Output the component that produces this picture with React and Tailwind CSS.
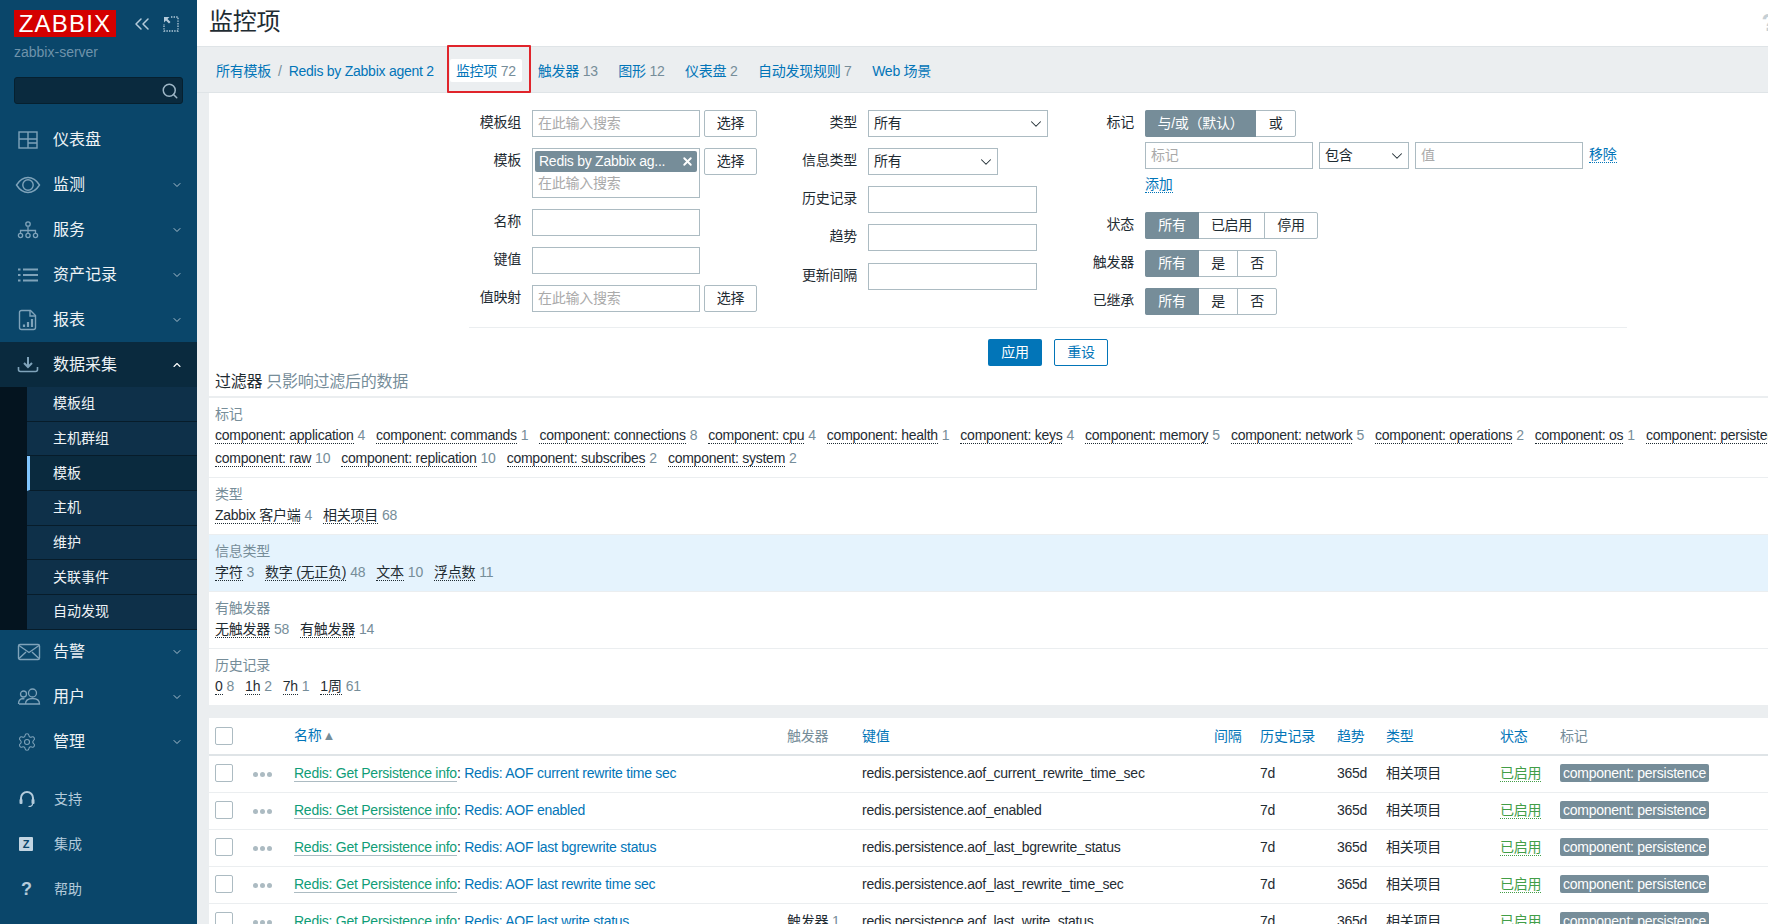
import React from 'react';
import { ChevronDown, ChevronUp, ChevronsLeft, Search, Settings, X } from 'lucide-react';

const FONT = "[font-family:'Liberation_Sans','Noto_Sans_CJK_SC',sans-serif]";
const ROW_GRID = 'grid grid-cols-[38px_41px_493px_75px_352px_46px_77px_49px_114px_60px_1fr] items-center pl-[6px] whitespace-nowrap';

const DashboardIcon = () => (
  <svg width="22" height="20" viewBox="0 0 22 20" fill="none" stroke="currentColor" strokeWidth="1.4">
    <rect x="2" y="2" width="18" height="16" />
    <path d="M11 2v16M2 9h18M11 13h9" />
  </svg>
);
const EyeIcon = () => (
  <svg width="26" height="20" viewBox="0 0 26 20" fill="none" stroke="currentColor" strokeWidth="1.4" className="-ml-[2px]">
    <path d="M1.5 10C5 4.5 9 2.5 13 2.5S21 4.5 24.5 10C21 15.5 17 17.5 13 17.5S5 15.5 1.5 10Z" />
    <circle cx="13" cy="10" r="5.2" />
  </svg>
);
const ServiceIcon = () => (
  <svg width="22" height="20" viewBox="0 0 22 20" fill="none" stroke="currentColor" strokeWidth="1.3">
    <circle cx="11" cy="4" r="2.2" />
    <path d="M11 6.5v4M3.5 13v-2.5h15V13M11 10.5V13" />
    <circle cx="3.5" cy="15.5" r="2.1" />
    <circle cx="11" cy="15.5" r="2.1" />
    <circle cx="18.5" cy="15.5" r="2.1" />
  </svg>
);
const ListIcon = () => (
  <svg width="22" height="20" viewBox="0 0 22 20" fill="none" stroke="currentColor" strokeWidth="2.2">
    <path d="M1 4.5h2.5M6 4.5h15M1 10h2.5M6 10h15M1 15.5h2.5M6 15.5h15" />
  </svg>
);
const ReportIcon = () => (
  <svg width="22" height="22" viewBox="0 0 22 22" fill="none" stroke="currentColor" strokeWidth="1.4">
    <path d="M4.5 1.5h9l5 5v12a2 2 0 0 1-2 2h-12a2 2 0 0 1-2-2v-15a2 2 0 0 1 2-2Z" />
    <path d="M13 1.5v5.5h5.5" />
    <path d="M7 18v-2.5M11 18v-5M15 18v-8" strokeWidth="2.2" />
  </svg>
);
const DownloadIcon = () => (
  <svg width="22" height="20" viewBox="0 0 22 20" fill="none" stroke="currentColor" strokeWidth="2">
    <path d="M11 2v9M7 8l4 4 4-4" />
    <path d="M1.5 12v2.5a2 2 0 0 0 2 2h15a2 2 0 0 0 2-2V12" strokeWidth="1.6" />
  </svg>
);
const MailIcon = () => (
  <svg width="24" height="20" viewBox="0 0 24 20" fill="none" stroke="currentColor" strokeWidth="1.4">
    <rect x="1.5" y="2.5" width="21" height="15" rx="1.5" />
    <path d="M2 3.5 12 10.5 22 3.5M2 16.5l7-6.5M22 16.5 15 10" />
  </svg>
);
const UsersIcon = () => (
  <svg width="24" height="20" viewBox="0 0 24 20" fill="none" stroke="currentColor" strokeWidth="1.3">
    <circle cx="6.5" cy="7" r="3" />
    <circle cx="15.5" cy="6" r="4" />
    <path d="M1.5 17c0-3 1-5 4-5.5 1 0 1.5.2 2 .5M2 17h6" />
    <path d="M8.5 17c0-3.5 2.5-5.5 7-5.5s7 2 7 5.5h-14Z" />
  </svg>
);
const HeadsetIcon = () => (
  <svg width="18" height="18" viewBox="0 0 18 18" fill="none" stroke="currentColor" strokeWidth="2">
    <path d="M3 11V8a6 6 0 0 1 12 0v3" />
    <rect x="1.5" y="9" width="3" height="5" rx="1" fill="currentColor" stroke="none" />
    <rect x="13.5" y="9" width="3" height="5" rx="1" fill="currentColor" stroke="none" />
    <path d="M14.5 14c0 1.5-1.5 2.5-4 2.5" strokeWidth="1.2" />
  </svg>
);
const KioskIcon = () => (
  <svg width="16" height="16" viewBox="0 0 16 16" fill="none" stroke="currentColor" strokeWidth="1.3">
    <path d="M8 1h7v14H1V8" strokeDasharray="1.4 1.2" />
    <path d="M1 1h5.5L4.5 3l3 3-1.5 1.5-3-3L1 6.5Z" fill="currentColor" stroke="none" />
  </svg>
);

function NavItem({ icon, label, open, active }) {
  return (
    <div className={`flex items-center h-[45px] pl-[17px] pr-[14px] ${active ? 'bg-[#0a2a3e]' : ''}`}>
      <span className="w-[36px] flex items-center text-[#7fa3ba]">{icon}</span>
      <span className="flex-1 text-base text-[#eef3f6]">{label}</span>
      {active ? <ChevronUp size={12} strokeWidth={2.2} className="text-white" /> : open && <ChevronDown size={12} strokeWidth={2} className="text-[#a9bfcd]" />}
    </div>
  );
}

function SubItem({ label, active }) {
  return (
    <div className={`flex items-center h-[34.7px] pb-px text-sm text-[#eef3f6] border-b border-[#071c2a] ${active ? 'bg-[#0a2a3e] border-l-[3px] border-l-[#80c6ff] pl-[23px]' : 'pl-[26px]'}`}>
      {label}
    </div>
  );
}

function FootItem({ icon, label }) {
  return (
    <div className="flex items-center h-[45px] pl-[18px]">
      <span className="w-[36px] flex items-center text-[#b4cbdb]">{icon}</span>
      <span className="text-sm text-[#b4cbdb]">{label}</span>
    </div>
  );
}

function Sidebar() {
  return (
    <aside className="w-[197px] shrink-0 h-full bg-[#0a466a] flex flex-col">
      <div className="flex items-center pt-[10px] pl-[14px]">
        <div className="w-[102px] h-[27px] bg-[#d40000] text-white text-[24px] leading-[27px] tracking-[1.2px] text-center">ZABBIX</div>
        <ChevronsLeft size={24} strokeWidth={1.5} className="ml-[14px] text-[#b4cbdb]" />
        <span className="ml-[9px] text-[#b4cbdb]"><KioskIcon /></span>
      </div>
      <div className="pl-[14px] mt-[5px] text-sm leading-5 text-[#6f93ab]">zabbix-server</div>
      <div className="mx-[14px] mt-[15px] h-[27px] rounded-[3px] bg-[#0a2a3e] border border-[#06202f] flex items-center justify-end pr-[3px]">
        <Search size={18} strokeWidth={2} className="text-[#9db6c6]" />
      </div>
      <nav className="mt-[13px]">
        <NavItem icon={<DashboardIcon />} label="仪表盘" />
        <NavItem icon={<EyeIcon />} label="监测" open />
        <NavItem icon={<ServiceIcon />} label="服务" open />
        <NavItem icon={<ListIcon />} label="资产记录" open />
        <NavItem icon={<ReportIcon />} label="报表" open />
        <NavItem icon={<DownloadIcon />} label="数据采集" active />
        <div className="bg-[#04141f] pl-[27px]">
          <div className="bg-[#0e3049]">
            <SubItem label="模板组" />
            <SubItem label="主机群组" />
            <SubItem label="模板" active />
            <SubItem label="主机" />
            <SubItem label="维护" />
            <SubItem label="关联事件" />
            <SubItem label="自动发现" />
          </div>
        </div>
        <NavItem icon={<MailIcon />} label="告警" open />
        <NavItem icon={<UsersIcon />} label="用户" open />
        <NavItem icon={<Settings size={20} strokeWidth={1.3} />} label="管理" open />
      </nav>
      <div className="mt-[12px]">
        <FootItem icon={<HeadsetIcon />} label="支持" />
        <FootItem icon={<span className="w-[14px] h-[14px] ml-px rounded-[1px] bg-[#c3d5e2] text-[#0a466a] text-[11px] leading-[14px] font-bold text-center">Z</span>} label="集成" />
        <FootItem icon={<span className="ml-[3px] text-lg leading-none font-bold">?</span>} label="帮助" />
      </div>
    </aside>
  );
}

function Tab({ label, count }) {
  return (
    <span className="px-[6px] text-sm text-[#0275b8]">
      {label} <span className="text-[#768d99]">{count}</span>
    </span>
  );
}

function SubNav() {
  return (
    <div className="h-[46px] shrink-0 bg-[#ebeef0] border-b border-[#dfe4e7] flex items-center pl-[19px] pt-[2px] text-sm whitespace-nowrap">
      <span className="text-[#0275b8]">所有模板</span>
      <span className="text-[#768d99] mx-[7px]">/</span>
      <span className="text-[#0275b8]">Redis by Zabbix agent 2</span>
      <div className="relative ml-[16px] h-[23px] bg-white rounded-[2px] flex items-center">
        <Tab label="监控项" count="72" />
        <div className="absolute -left-[3px] -right-[9px] -top-[14px] -bottom-[11px] border-2 border-[#e0242b] rounded-[1px]"></div>
      </div>
      <div className="flex items-center ml-[10px] gap-[8.5px]">
        <Tab label="触发器" count="13" />
        <Tab label="图形" count="12" />
        <Tab label="仪表盘" count="2" />
        <Tab label="自动发现规则" count="7" />
        <Tab label="Web 场景" />
      </div>
    </div>
  );
}

function Label({ w, children }) {
  return <div className={`${w} shrink-0 text-right text-sm text-[#1f2c33] leading-[25px] mr-[11px]`}>{children}</div>;
}

function Input({ w, placeholder }) {
  return (
    <input
      readOnly
      placeholder={placeholder}
      className={`${w} h-[27px] shrink-0 border border-[#acbbc2] bg-white px-[5px] pb-[2px] text-sm outline-none placeholder:text-[#aaaaaa]`}
    />
  );
}

function SelectBox({ w, value }) {
  return (
    <div className={`${w} h-[27px] shrink-0 border border-[#acbbc2] bg-white pl-[5px] pr-[2px] flex items-center justify-between text-sm text-[#1f2c33]`}>
      <span className="pb-[2px]">{value}</span>
      <ChevronDown size={18} strokeWidth={1.4} />
    </div>
  );
}

function PickButton() {
  return <button className="w-[53px] h-[27px] ml-[4px] pb-px shrink-0 border border-[#acbbc2] rounded-[2px] bg-white text-sm text-[#1f2c33]">选择</button>;
}

function Segmented({ items }) {
  return (
    <div className="flex h-[27px] rounded-[2px] border border-[#acbbc2] text-sm text-[#1f2c33] bg-white">
      {items.map((it, i) => (
        <div
          key={it.t}
          className={`${it.w} flex items-center justify-center pb-[2px] -my-px ${i === 0 ? '-ml-px bg-[#768d99] text-white rounded-l-[2px]' : ''} ${i > 1 ? 'border-l border-[#acbbc2]' : ''}`}
        >
          {it.t}
        </div>
      ))}
    </div>
  );
}

function FilterForm() {
  return (
    <div>
      <div className="flex pt-[17px] pl-[252px]">
        <div className="w-[296px] shrink-0 flex flex-col gap-[11px]">
          <div className="flex"><Label w="w-[60px]">模板组</Label><Input w="w-[168px]" placeholder="在此输入搜索" /><PickButton /></div>
          <div className="flex">
            <Label w="w-[60px]">模板</Label>
            <div className="w-[168px] h-[50px] shrink-0 border border-[#acbbc2] bg-white p-[2px] text-sm">
              <div className="h-[21px] bg-[#768d99] text-white rounded-[2px] flex items-center justify-between pl-[4px] pr-[3px] pb-px">
                <span>Redis by Zabbix ag...</span>
                <X size={13} strokeWidth={3.5} />
              </div>
              <div className="pl-[3px] text-[#aaaaaa] leading-[23px]">在此输入搜索</div>
            </div>
            <PickButton />
          </div>
          <div className="flex"><Label w="w-[60px]">名称</Label><Input w="w-[168px]" /></div>
          <div className="flex"><Label w="w-[60px]">键值</Label><Input w="w-[168px]" /></div>
          <div className="flex"><Label w="w-[60px]">值映射</Label><Input w="w-[168px]" placeholder="在此输入搜索" /><PickButton /></div>
        </div>
        <div className="w-[261px] ml-[30px] shrink-0 flex flex-col gap-[11px]">
          <div className="flex"><Label w="w-[70px]">类型</Label><SelectBox w="w-[180px]" value="所有" /></div>
          <div className="flex"><Label w="w-[70px]">信息类型</Label><SelectBox w="w-[130px]" value="所有" /></div>
          <div className="flex"><Label w="w-[70px]">历史记录</Label><Input w="w-[169px]" /></div>
          <div className="flex"><Label w="w-[70px]">趋势</Label><Input w="w-[169px]" /></div>
          <div className="flex mt-px"><Label w="w-[70px]">更新间隔</Label><Input w="w-[169px]" /></div>
        </div>
        <div className="ml-[16px] flex flex-col">
          <div className="flex">
            <Label w="w-[70px]">标记</Label>
            <Segmented items={[{ t: '与/或（默认）', w: 'w-[111px]' }, { t: '或', w: 'w-[39px]' }]} />
          </div>
          <div className="flex ml-[81px] mt-[5px] items-center">
            <Input w="w-[168px]" placeholder="标记" />
            <div className="ml-[6px]"><SelectBox w="w-[90px]" value="包含" /></div>
            <div className="ml-[6px]"><Input w="w-[168px]" placeholder="值" /></div>
            <span className="ml-[6px] mb-[2px] text-sm text-[#0275b8] border-b border-dotted border-[#0275b8] leading-[16px]">移除</span>
          </div>
          <div className="ml-[81px] mt-[5px] h-[20px] text-sm text-[#0275b8]">
            <span className="border-b border-dotted border-[#0275b8] leading-[16px] inline-block">添加</span>
          </div>
          <div className="flex mt-[18px]">
            <Label w="w-[70px]">状态</Label>
            <Segmented items={[{ t: '所有', w: 'w-[54px]' }, { t: '已启用', w: 'w-[65px]' }, { t: '停用', w: 'w-[53px]' }]} />
          </div>
          <div className="flex mt-[11px]">
            <Label w="w-[70px]">触发器</Label>
            <Segmented items={[{ t: '所有', w: 'w-[54px]' }, { t: '是', w: 'w-[38px]' }, { t: '否', w: 'w-[39px]' }]} />
          </div>
          <div className="flex mt-[11px]">
            <Label w="w-[70px]">已继承</Label>
            <Segmented items={[{ t: '所有', w: 'w-[54px]' }, { t: '是', w: 'w-[38px]' }, { t: '否', w: 'w-[39px]' }]} />
          </div>
        </div>
      </div>
      <div className="ml-[260px] w-[1158px] mt-[12px] border-t border-[#ebeef0] pt-[11px] flex justify-center gap-[12px]">
        <button className="w-[54px] h-[27px] pb-px rounded-[2px] bg-[#0275b8] text-white text-sm">应用</button>
        <button className="w-[54px] h-[27px] pb-px rounded-[2px] border border-[#0275b8] bg-white text-[#0275b8] text-sm">重设</button>
      </div>
    </div>
  );
}

function Chip({ name, n }) {
  return (
    <span className="flex items-baseline gap-[4px]">
      <span className="border-b border-dotted border-[#1f2c33] text-[#1f2c33] leading-[16px]">{name}</span>
      <span className="text-[#768d99]">{n}</span>
    </span>
  );
}

function Section({ title, rows, highlight }) {
  return (
    <div className={`pt-[6px] pb-[8px] pl-[6px] border-b border-[#ebeef0] text-sm whitespace-nowrap ${highlight ? 'bg-[#e5f3fd]' : ''}`}>
      <div className="h-[19px] leading-[21px] text-[#768d99]">{title}</div>
      {rows.map((row, i) => (
        <div key={i} className="h-[23px] flex items-center gap-[11px]">
          {row.map(([name, n]) => <Chip key={name} name={name} n={n} />)}
        </div>
      ))}
    </div>
  );
}

function Overview() {
  return (
    <div>
      <div className="h-[32px] pl-[6px] pt-[2px] flex items-center border-b-2 border-[#ebeef0] text-base">
        <span className="text-[#1f2c33]">过滤器</span>
        <span className="ml-[4px] text-[#768d99]">只影响过滤后的数据</span>
      </div>
      <Section
        title="标记"
        rows={[
          [['component: application', 4], ['component: commands', 1], ['component: connections', 8], ['component: cpu', 4], ['component: health', 1], ['component: keys', 4], ['component: memory', 5], ['component: network', 5], ['component: operations', 2], ['component: os', 1], ['component: persistence', 9]],
          [['component: raw', 10], ['component: replication', 10], ['component: subscribes', 2], ['component: system', 2]],
        ]}
      />
      <Section title="类型" rows={[[['Zabbix 客户端', 4], ['相关项目', 68]]]} />
      <Section title="信息类型" highlight rows={[[['字符', 3], ['数字 (无正负)', 48], ['文本', 10], ['浮点数', 11]]]} />
      <Section title="有触发器" rows={[[['无触发器', 58], ['有触发器', 14]]]} />
      <Section title="历史记录" rows={[[['0', 8], ['1h', 2], ['7h', 1], ['1周', 61]]]} />
    </div>
  );
}

const rows = [
  { name: 'Redis: AOF current rewrite time sec', key: 'redis.persistence.aof_current_rewrite_time_sec' },
  { name: 'Redis: AOF enabled', key: 'redis.persistence.aof_enabled' },
  { name: 'Redis: AOF last bgrewrite status', key: 'redis.persistence.aof_last_bgrewrite_status' },
  { name: 'Redis: AOF last rewrite time sec', key: 'redis.persistence.aof_last_rewrite_time_sec' },
  { name: 'Redis: AOF last write status', key: 'redis.persistence.aof_last_write_status', trigger: true },
];

function Checkbox() {
  return <div className="w-[18px] h-[18px] border border-[#acbbc2] rounded-[2px] bg-white"></div>;
}

function ItemsTable() {
  return (
    <div className="bg-white text-sm">
      <div className={`${ROW_GRID} h-[38px] pb-px border-b-2 border-[#dfe4e7] text-[#0275b8]`}>
        <Checkbox />
        <span></span>
        <span>名称<span className="text-[13px] text-[#768d99] ml-px">▲</span></span>
        <span className="text-[#768d99]">触发器</span>
        <span>键值</span>
        <span>间隔</span>
        <span>历史记录</span>
        <span>趋势</span>
        <span>类型</span>
        <span>状态</span>
        <span className="text-[#768d99]">标记</span>
      </div>
      {rows.map((r) => (
        <div key={r.key} className={`${ROW_GRID} h-[37px] pb-[3px] border-b border-[#ebeef0] text-[#1f2c33]`}>
          <Checkbox />
          <span className="flex gap-[2px] pt-[3px]">
            <span className="w-[5px] h-[5px] rounded-full bg-[#acbbc2]"></span>
            <span className="w-[5px] h-[5px] rounded-full bg-[#acbbc2]"></span>
            <span className="w-[5px] h-[5px] rounded-full bg-[#acbbc2]"></span>
          </span>
          <span className="text-[#0275b8]">
            <span className="text-[#0f9d77] border-b border-[#acbbc2]">Redis: Get Persistence info</span>
            <span className="text-[#1f2c33]">: </span>
            {r.name}
          </span>
          <span>{r.trigger && <>触发器 <span className="text-[#768d99]">1</span></>}</span>
          <span>{r.key}</span>
          <span></span>
          <span>7d</span>
          <span>365d</span>
          <span>相关项目</span>
          <span><span className="text-[#429e47] border-b border-dotted border-[#429e47] leading-[16px] inline-block">已启用</span></span>
          <span><span className="inline-block h-[18px] leading-[18px] px-[3px] rounded-[2px] bg-[#768d99] text-white">component: persistence</span></span>
        </div>
      ))}
    </div>
  );
}

export default function App() {
  return (
    <div className={`flex w-full h-[924px] overflow-hidden bg-[#ebeef0] ${FONT}`}>
      <Sidebar />
      <main className="flex-1 min-w-0 flex flex-col overflow-hidden tracking-[-0.25px]">
        <header className="h-[47px] shrink-0 bg-white border-b border-[#dfe4e7] flex items-center justify-between pl-3">
          <h1 className="text-2xl text-[#1f2c33] pb-[2px]">监控项</h1>
          <span className="text-2xl font-bold text-[#c5cfd5] -mr-[8px]">?</span>
        </header>
        <SubNav />
        <div className="ml-3 bg-white">
          <FilterForm />
          <Overview />
        </div>
        <div className="ml-3 mt-3">
          <ItemsTable />
        </div>
      </main>
    </div>
  );
}
